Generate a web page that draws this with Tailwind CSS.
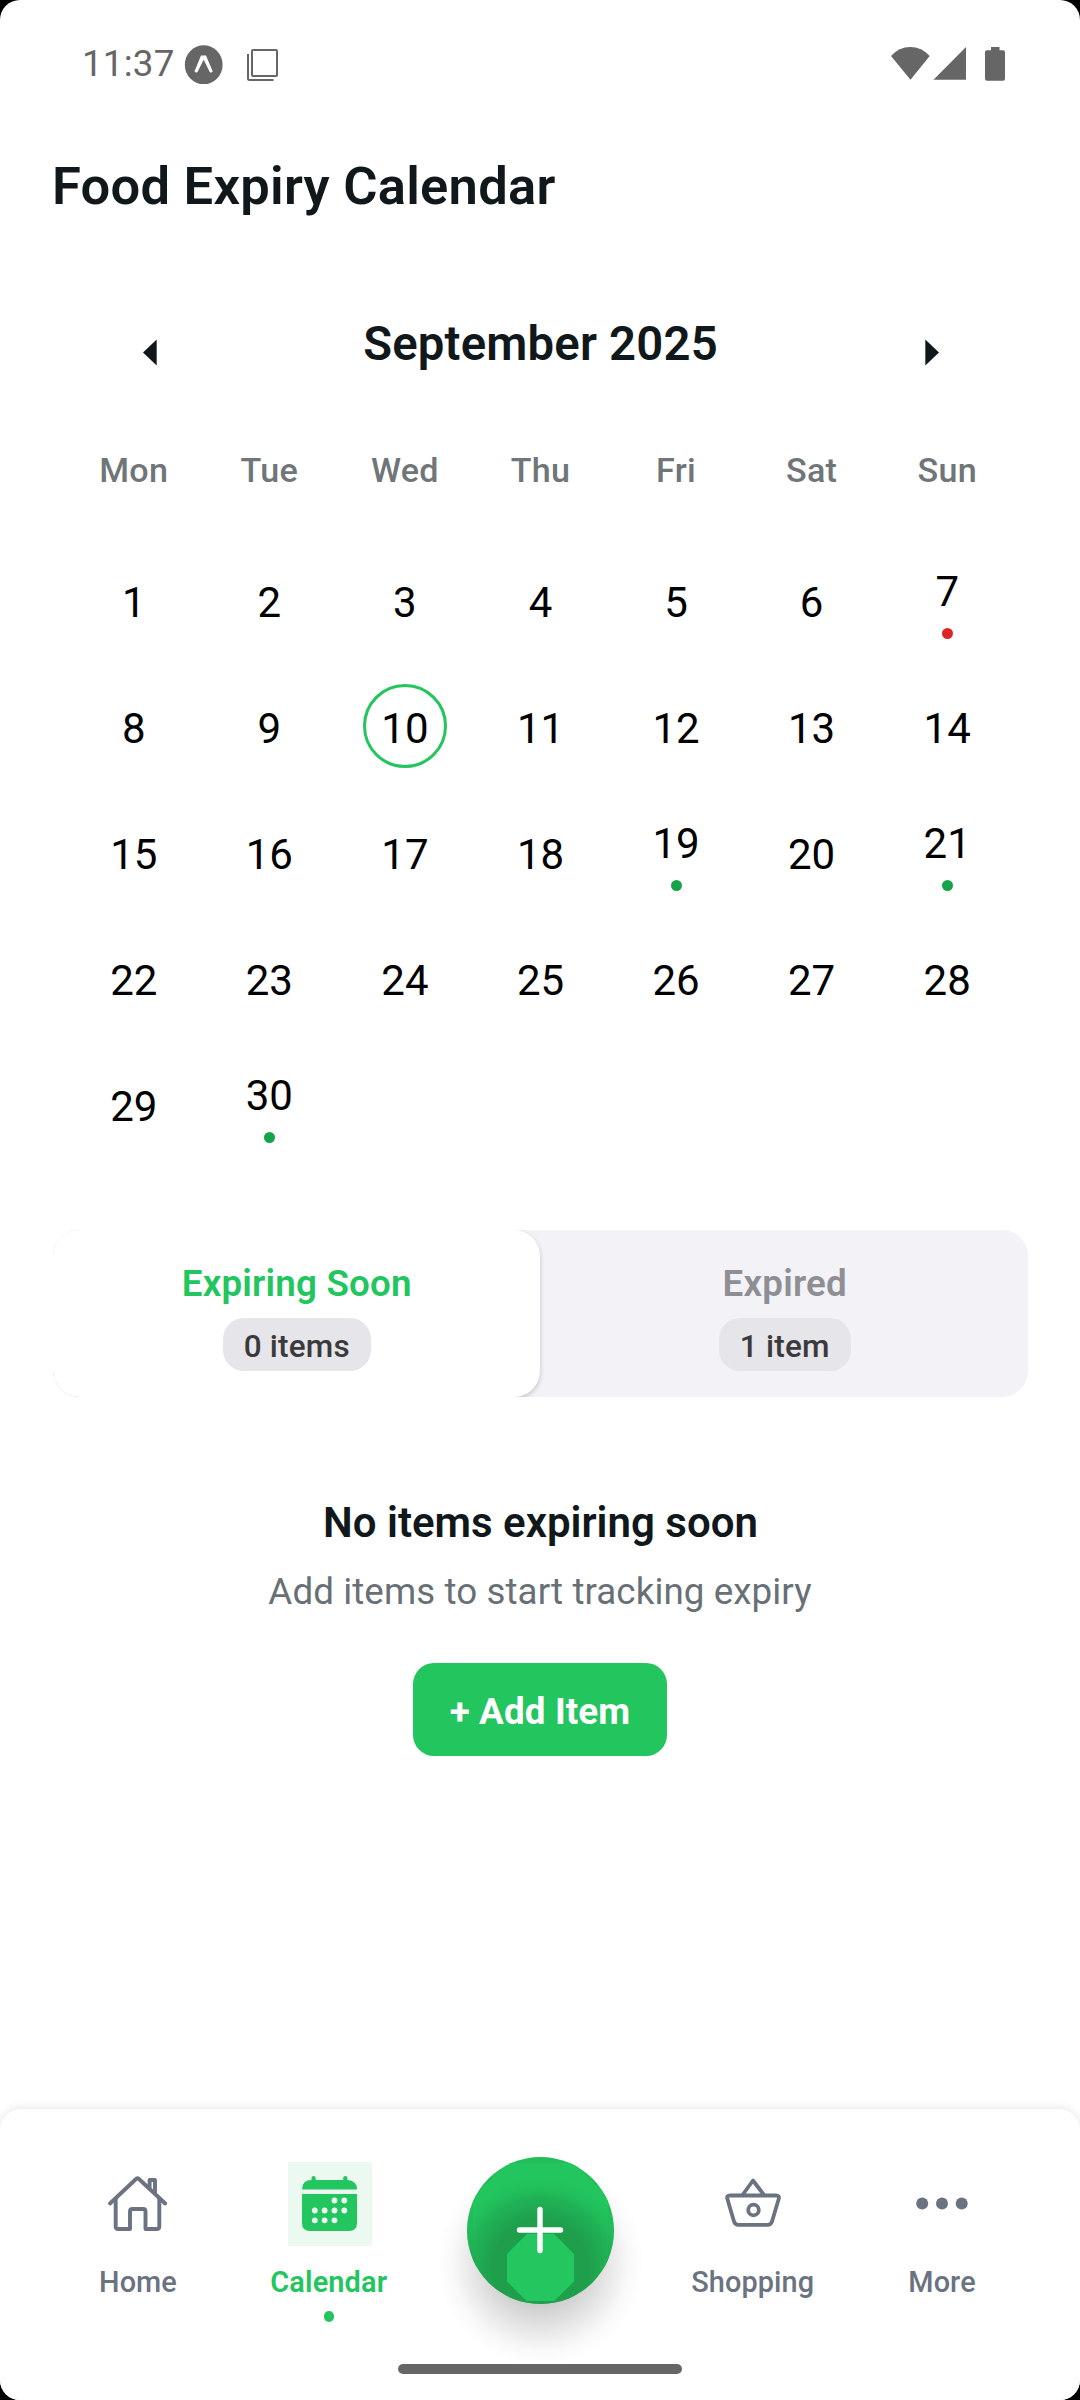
<!DOCTYPE html>
<html lang="en">
<head>
<meta charset="utf-8">
<title>Food Expiry Calendar</title>
<script src="https://cdn.jsdelivr.net/npm/@tailwindcss/browser@4"></script>
</head>
<body class="bg-black font-['Roboto',sans-serif]">
<div class="flex h-[2400px] w-[1080px] flex-col overflow-hidden rounded-[20px] bg-white text-[#11181c]">

  <!-- Status bar -->
  <div class="flex h-[128px] items-center justify-between pr-[75px] pl-[82px] text-[#666]">
    <div class="flex items-center">
      <span class="w-[102px] pt-px text-[36.75px] leading-none tracking-[0.2px]">11:37</span>
      <svg class="h-[40px] w-[40px]" viewBox="0 0 40 40"><ellipse cx="19.700" cy="20.800" rx="18.900" ry="19.500" fill="#666"/><path d="M10.500 27.200 17 11.500h5L28.700 27.200q-1.300 2.300-3 .8L19.700 15.800 13.500 28q-1.700 1.500-3-.8z" fill="#fff"/><path d="M19.700 17.500 25.500 29H14z" fill="#666"/></svg>
      <svg class="ml-[22px] h-[34px] w-[34px]" viewBox="0 0 34 34" fill="none" stroke="#666" stroke-width="2"><rect x="6" y="3" width="25" height="26" rx="1"/><path d="M2 7V31.500q0 1.500 1.500 1.500H27.500"/></svg>
    </div>
    <svg class="h-[36px] w-[114px]" viewBox="0 0 114 36" fill="#666"><path d="M0 10Q8 1 19.300 1T38.700 10L19.500 33.700z"/><path d="M42.500 33.700H75V1z"/><path d="M100 1h8.500v3.200h3.500q2 0 2 2v26.500q0 2-2 2H96q-2 0-2-2V6.200q0-2 2-2h4z"/></svg>
  </div>

  <h1 class="flex h-[117px] items-center pl-[52px] text-[52.500px] font-semibold tracking-[0.250px]">Food Expiry Calendar</h1>

  <!-- Calendar -->
  <section class="flex flex-col pr-[65px] pl-[66px]">
    <div class="flex h-[198px] items-center justify-between px-[76.500px]">
      <svg class="mt-[17px] h-[27px] w-[15px]" viewBox="0 0 15 27"><path d="M0 13.500 13.700.5v26z" fill="#11181c"/></svg>
      <h2 class="text-[47.250px] font-semibold tracking-[0.200px]">September 2025</h2>
      <svg class="mt-[17px] h-[27px] w-[15px]" viewBox="0 0 15 27"><path d="M15 13.500 1.300.5v26z" fill="#11181c"/></svg>
    </div>
    <div class="grid h-[54px] grid-cols-7 items-center pt-px text-center text-[34.125px] font-medium tracking-[0.3px] text-[#707579]">
      <span>Mon</span><span>Tue</span><span>Wed</span><span>Thu</span><span>Fri</span><span>Sat</span><span>Sun</span>
    </div>
    <div class="mt-[40px] grid auto-rows-[126px] grid-cols-7 place-items-center text-[42px] leading-[84px] text-black">
      <span class="h-[84px] pt-[3px]">1</span>
      <span class="h-[84px] pt-[3px]">2</span>
      <span class="h-[84px] pt-[3px]">3</span>
      <span class="h-[84px] pt-[3px]">4</span>
      <span class="h-[84px] pt-[3px]">5</span>
      <span class="h-[84px] pt-[3px]">6</span>
      <div class="flex h-[84px] flex-col items-center"><span class="h-[70px] leading-[67px]">7</span><i class="size-[11px] shrink-0 rounded-full bg-[#dc2626]"></i></div>
      <span class="h-[84px] pt-[3px]">8</span>
      <span class="h-[84px] pt-[3px]">9</span>
      <span class="size-[84px] rounded-full border-[3px] border-[#22c55e] text-center">10</span>
      <span class="h-[84px] pt-[3px]">11</span>
      <span class="h-[84px] pt-[3px]">12</span>
      <span class="h-[84px] pt-[3px]">13</span>
      <span class="h-[84px] pt-[3px]">14</span>
      <span class="h-[84px] pt-[3px]">15</span>
      <span class="h-[84px] pt-[3px]">16</span>
      <span class="h-[84px] pt-[3px]">17</span>
      <span class="h-[84px] pt-[3px]">18</span>
      <div class="flex h-[84px] flex-col items-center"><span class="h-[70px] leading-[67px]">19</span><i class="size-[11px] shrink-0 rounded-full bg-[#16a34a]"></i></div>
      <span class="h-[84px] pt-[3px]">20</span>
      <div class="flex h-[84px] flex-col items-center"><span class="h-[70px] leading-[67px]">21</span><i class="size-[11px] shrink-0 rounded-full bg-[#16a34a]"></i></div>
      <span class="h-[84px] pt-[3px]">22</span>
      <span class="h-[84px] pt-[3px]">23</span>
      <span class="h-[84px] pt-[3px]">24</span>
      <span class="h-[84px] pt-[3px]">25</span>
      <span class="h-[84px] pt-[3px]">26</span>
      <span class="h-[84px] pt-[3px]">27</span>
      <span class="h-[84px] pt-[3px]">28</span>
      <span class="h-[84px] pt-[3px]">29</span>
      <div class="flex h-[84px] flex-col items-center"><span class="h-[70px] leading-[67px]">30</span><i class="size-[11px] shrink-0 rounded-full bg-[#16a34a]"></i></div>
    </div>
  </section>

  <!-- Tabs -->
  <div class="mx-[52.500px] mt-[63px] grid h-[166.500px] grid-cols-2 overflow-hidden rounded-[26px] bg-[#f2f2f7] text-center">
    <div class="flex flex-col items-center rounded-[26px] bg-white pt-[32px] pl-px shadow-[0_2px_5px_rgba(0,0,0,0.2)]">
      <span class="text-[36.750px] leading-[43px] font-semibold tracking-[0.200px] text-[#22c55e]">Expiring Soon</span>
      <span class="mt-[13px] h-[53px] rounded-[21px] bg-[#e5e5ea] px-[21px] text-[31.500px] leading-[58px] font-medium tracking-[0.200px] text-[#3a3a3c]">0 items</span>
    </div>
    <div class="flex flex-col items-center pt-[32px] pl-[2px]">
      <span class="text-[36.750px] leading-[43px] font-semibold tracking-[0.200px] text-[#8e8e93]">Expired</span>
      <span class="mt-[13px] h-[53px] rounded-[21px] bg-[#e5e5ea] px-[21px] text-[31.500px] leading-[58px] font-medium tracking-[0.200px] text-[#3a3a3c]">1 item</span>
    </div>
  </div>

  <!-- Empty state -->
  <div class="mt-[98px] flex flex-col items-center">
    <h3 class="pl-px text-[42px] leading-[56px] font-semibold">No items expiring soon</h3>
    <p class="mt-[16px] text-[36.750px] leading-[50px] tracking-[0.080px] text-[#687076]">Add items to start tracking expiry</p>
    <button class="mt-[46px] h-[93px] rounded-[21px] bg-[#22c55e] px-[36.750px] pt-[4px] text-[36.750px] leading-[89px] font-bold tracking-[0.150px] text-white">+ Add Item</button>
  </div>

  <!-- Bottom navigation -->
  <nav class="relative mt-auto h-[291px] rounded-t-[21px] bg-white text-[28.875px] leading-[36px] font-medium text-[#6b7280] shadow-[0_-2px_8px_rgba(0,0,0,0.09)]">
    <div class="flex justify-between pt-[53px] pr-[84px] pl-[84px]">
      <div class="flex w-[108px] flex-col items-center">
        <svg class="h-[84px] w-[84px]" viewBox="96 2162 84 84" fill="none" stroke="#6b7280" stroke-width="3.900" stroke-linecap="round" stroke-linejoin="round"><path d="M110 2203.500 135.500 2179.500Q137.500 2177 139.500 2179.500L165.200 2203.500"/><path d="M115.700 2199V2226.500Q115.700 2229 118.200 2229H130V2211.500Q130 2209 132.500 2209H143Q145.500 2209 145.500 2211.500V2229H156.800Q159.300 2229 159.300 2226.500V2199"/><path d="M149.600 2187.500V2180H155V2193"/></svg>
        <span class="mt-[18px] tracking-[0.100px]">Home</span>
      </div>
      <div class="flex w-[130px] flex-col items-center">
        <svg class="ml-[2px] h-[84px] w-[84px] bg-[#ebf9f1]" viewBox="288 2162 84 84"><path fill="#22c55e" d="M302 2189.500Q302 2180 311.500 2180V2178a2.100 2.100 0 0 1 4.200 0V2180H343.200V2178a2.100 2.100 0 0 1 4.200 0V2180Q357 2180.500 357 2189.500zM302 2194H357V2223Q357 2231 349 2231H310Q302 2231 302 2223z"/><g fill="#ebf9f1"><circle cx="334.500" cy="2200.500" r="2.900"/><circle cx="344.300" cy="2200.500" r="2.900"/><circle cx="314.800" cy="2210.500" r="2.900"/><circle cx="324.600" cy="2210.500" r="2.900"/><circle cx="334.500" cy="2210.500" r="2.900"/><circle cx="344.300" cy="2210.500" r="2.900"/><circle cx="314.800" cy="2220.300" r="2.900"/><circle cx="324.600" cy="2220.300" r="2.900"/><circle cx="334.500" cy="2220.300" r="2.900"/></g></svg>
        <span class="mt-[18px] font-semibold tracking-[0.150px] text-[#22c55e]">Calendar</span>
        <i class="mt-[11px] h-[11px] w-[10.500px] rounded-full bg-[#22c55e]"></i>
      </div>
      <svg class="-mx-[45.500px] -mt-[53px] h-[291px] w-[240px] shrink-0" viewBox="420 2109 240 291">
        <defs>
          <radialGradient id="drop" gradientUnits="userSpaceOnUse" cx="540.500" cy="2262" r="104"><stop offset="0" stop-color="#000" stop-opacity=".24"/><stop offset=".4" stop-color="#000" stop-opacity=".2"/><stop offset=".65" stop-color="#000" stop-opacity=".1"/><stop offset=".85" stop-color="#000" stop-opacity=".025"/><stop offset="1" stop-color="#000" stop-opacity="0"/></radialGradient>
          <radialGradient id="inner" gradientUnits="userSpaceOnUse" cx="540.500" cy="2268" r="94"><stop offset="0" stop-color="#1f9d4b"/><stop offset=".52" stop-color="#1f9f4c"/><stop offset=".75" stop-color="#1fa650" stop-opacity=".6"/><stop offset="1" stop-color="#22c55e" stop-opacity="0"/></radialGradient>
          <clipPath id="disc"><circle cx="540.500" cy="2230.500" r="73.500"/></clipPath>
        </defs>
        <circle cx="540.500" cy="2262" r="104" fill="url(#drop)"/>
        <g clip-path="url(#disc)">
          <path d="M467 2157h147v147h-147z" fill="#22bd5b"/>
          <path d="M508 2163H573L608 2197V2264L573 2298H508L473 2264V2197z" fill="#22c55e"/>
          <path d="M467 2157h147v147h-147z" fill="url(#inner)"/>
        </g>
        <path d="M527 2233.700H554L574 2254V2281.500L554.500 2301H526.500L507 2281.500V2254z" fill="#24c75f"/>
        <path d="M519.500 2230H560.500M540 2209.500V2250.500" stroke="#fff" stroke-width="5.400" stroke-linecap="round"/>
      </svg>
      <div class="flex w-[130px] flex-col items-center pl-[3px]">
        <svg class="h-[84px] w-[84px]" viewBox="710.500 2162 84 84" fill="none" stroke="#6b7280" stroke-width="3.800" stroke-linejoin="round"><path d="M729.500 2195.500H775.500Q779.300 2195.500 778.200 2199L771.500 2221.500Q770.500 2224.900 767 2224.900H738Q734.500 2224.900 733.500 2221.500L726.900 2199Q725.800 2195.500 729.500 2195.500z"/><path d="M742 2195 752.500 2180.500 763.500 2195"/><circle cx="753" cy="2210" r="5.300"/></svg>
        <span class="mt-[18px] tracking-[0.100px]">Shopping</span>
      </div>
      <div class="flex w-[108px] flex-col items-center">
        <svg class="h-[84px] w-[84px]" viewBox="900.500 2162 84 84" fill="#6b7280"><circle cx="922.700" cy="2203.500" r="6"/><circle cx="942.500" cy="2203.500" r="6"/><circle cx="962.200" cy="2203.500" r="6"/></svg>
        <span class="mt-[18px] tracking-[0.100px]">More</span>
      </div>
    </div>
    <div class="absolute bottom-[26px] left-[398px] h-[10px] w-[284px] rounded-full bg-[#666]"></div>
  </nav>
</div>
</body>
</html>
